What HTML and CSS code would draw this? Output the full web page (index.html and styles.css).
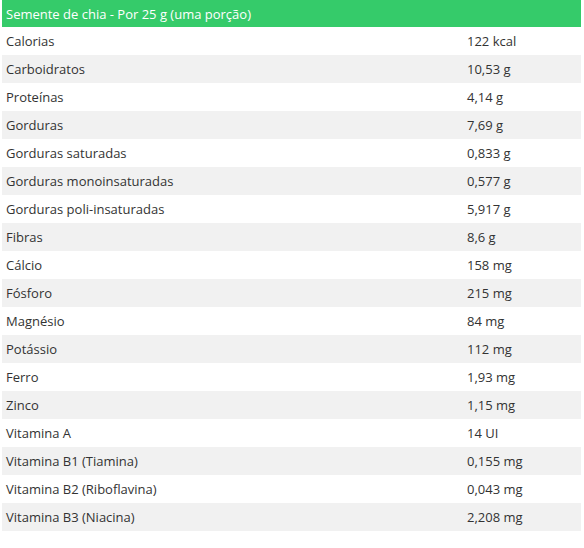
FILE: index.html
```html
<!DOCTYPE html>
<html lang="pt">
<head>
<meta charset="utf-8">
<link rel="stylesheet" href="styles.css">
</head>
<body>
<table class="nutri">
<colgroup><col class="c-label"><col class="c-val"></colgroup>
<thead>
<tr><th colspan="2">Semente de chia - Por 25 g (uma porção)</th></tr>
</thead>
<tbody>
<tr><td>Calorias</td><td>122 kcal</td></tr>
<tr><td>Carboidratos</td><td>10,53 g</td></tr>
<tr><td>Proteínas</td><td>4,14 g</td></tr>
<tr><td>Gorduras</td><td>7,69 g</td></tr>
<tr><td>Gorduras saturadas</td><td>0,833 g</td></tr>
<tr><td>Gorduras monoinsaturadas</td><td>0,577 g</td></tr>
<tr><td>Gorduras poli-insaturadas</td><td>5,917 g</td></tr>
<tr><td>Fibras</td><td>8,6 g</td></tr>
<tr><td>Cálcio</td><td>158 mg</td></tr>
<tr><td>Fósforo</td><td>215 mg</td></tr>
<tr><td>Magnésio</td><td>84 mg</td></tr>
<tr><td>Potássio</td><td>112 mg</td></tr>
<tr><td>Ferro</td><td>1,93 mg</td></tr>
<tr><td>Zinco</td><td>1,15 mg</td></tr>
<tr><td>Vitamina A</td><td>14 UI</td></tr>
<tr><td>Vitamina B1 (Tiamina)</td><td>0,155 mg</td></tr>
<tr><td>Vitamina B2 (Riboflavina)</td><td>0,043 mg</td></tr>
<tr><td>Vitamina B3 (Niacina)</td><td>2,208 mg</td></tr>
</tbody>
</table>
</body>
</html>
```
FILE: styles.css
```css
body {
  margin: 0;
  background: #fff;
  font-family: "Open Sans", sans-serif;
  font-size: 13px;
  color: #333;
}
.nutri {
  margin-left: 2px;
  width: 579px;
  border-collapse: collapse;
  table-layout: fixed;
}
.c-label {
  width: 461px;
}
.c-val {
  width: 118px;
}
.nutri th {
  background: #35cb6a;
  color: #fff;
  font-weight: normal;
  text-align: left;
  height: 27px;
  padding: 0 0 0 4px;
}
.nutri td {
  height: 28px;
  padding: 0 0 0 4px;
  vertical-align: middle;
}
.nutri tbody tr:nth-child(even) td {
  background: #f1f1f1;
}
```
